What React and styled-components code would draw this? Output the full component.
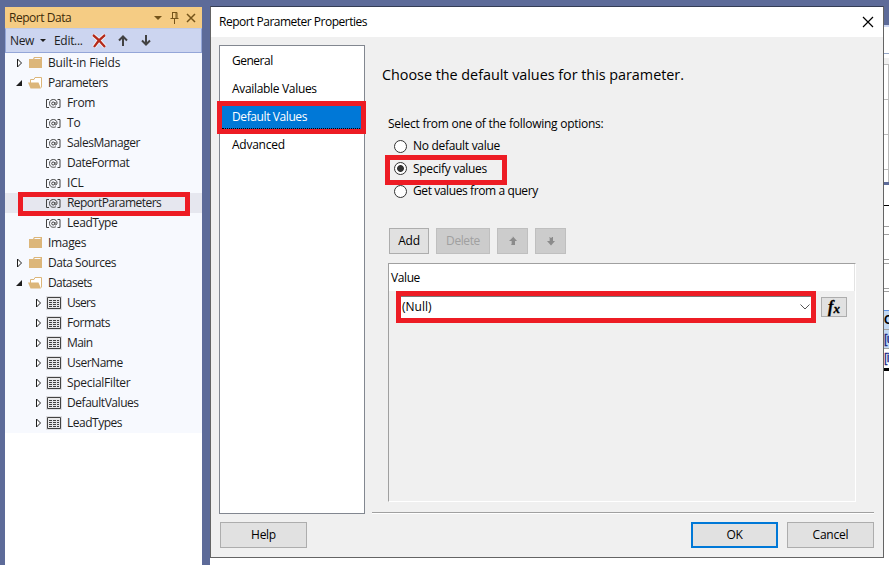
import React from 'react';
import styled, { createGlobalStyle, css } from 'styled-components';

const Global = createGlobalStyle`
  *{box-sizing:border-box}
  body{margin:0;overflow:hidden;background:#5d6b99;font:12px/16px "Open Sans","Noto Sans",sans-serif;color:#000}
`;
const Screen = styled.div`position:relative;display:flex;width:889px;height:565px;overflow:hidden;background:#5d6b99;`;
const Label = styled.span`white-space:pre;letter-spacing:${p => p.$ls || 0}px;`;

/* Report data pane */
const Pane = styled.aside`width:197px;height:558px;margin:7px 8px 0 5px;background:#fff;flex:none;`;
const PaneTitle = styled.header`height:21px;background:#f5cc84;display:flex;align-items:center;padding-left:4px;color:#3d2b0a;
  span{width:144px} svg{flex:none}`;
const Toolbar = styled.div`height:25px;background:#ccd5f0;border:1px solid #94a6d8;border-top-color:#c0cbe8;display:flex;align-items:center;padding-left:4px;color:#1e1e1e;`;
const Tree = styled.div`background:#f7f9fe;height:380px;`;
const TreeRow = styled.div`height:20px;display:flex;align-items:center;color:#1e1e1e;padding-left:${p => (p.$level ? 30 : 11)}px;
  background:${p => (p.$on ? '#e6e7ef' : 'transparent')};svg{flex:none}`;
const Slot = styled.span`display:flex;width:${p => p.$w}px;height:20px;align-items:center;flex:none;`;

/* Dialog */
const Dialog = styled.section`width:674px;height:552px;margin-top:6px;flex:none;background:#f0f0f0;border:1px solid #646464;border-top-color:#343d55;display:flex;flex-direction:column;`;
const DialogTitle = styled.header`height:30px;background:#fff;display:flex;justify-content:space-between;align-items:center;padding:0 9px 0 8px;`;
const Body = styled.div`display:flex;height:477px;padding:8px 9px 0 8px;`;
const Nav = styled.nav`width:146px;height:469px;background:#fff;border:1px solid #828790;padding:1px 2px;`;
const NavItem = styled.div`height:28px;padding:6px 10px;
  ${p => p.$on && css`color:#fff;background:#0078d7;height:26px;margin-bottom:2px;border-bottom:1px dotted #000;`}`;
const Content = styled.main`width:502px;margin-left:7px;height:469px;display:flex;flex-direction:column;border-bottom:1px solid #fff;box-shadow:inset 0 -1px #a0a0a0;`;
const Heading = styled.h1`margin:20px 0 0 10px;font:400 14.4px/20px "Open Sans",sans-serif;white-space:pre;letter-spacing:${p => p.$ls}px;`;
const Prompt = styled.div`margin:31px 0 0 16px;height:16px;`;
const Options = styled.div`margin:3px 0 0 22px;height:68px;`;
const Option = styled.div`height:22.5px;display:flex;align-items:center;gap:6px;`;
const Radio = styled.i`width:13px;height:13px;border:1px solid #333;border-radius:50%;background:${p => (p.$on ? 'radial-gradient(circle,#333 0 3px,#fff 3.8px)' : '#fff')};`;
const Actions = styled.div`display:flex;gap:7px;margin:25px 0 0 17px;`;
const Button = styled.button`width:${p => p.$w}px;height:26px;padding:0;border:${p => (p.$primary ? '2px solid #0078d7' : '1px solid #adadad')};background:#e1e1e1;
  font:inherit;color:#000;display:flex;align-items:center;justify-content:center;flex:none;
  &:disabled{background:#ccc;border-color:#bfbfbf;color:#a0a0a0}`;
const Grid = styled.div`margin:9px 0 0 16px;width:468px;height:239px;border:1px solid #fff;border-top-color:#a0a0a0;border-left-color:#a0a0a0;`;
const GridHead = styled.div`height:27px;background:#fff;padding:6px 2px;border-right:1px solid #e3e3e3;`;
const GridRow = styled.div`display:flex;align-items:center;height:32px;padding-left:10px;gap:8px;`;
const Combo = styled.div`width:414px;height:23px;background:#fff;border:1px solid #7a7a7a;display:flex;align-items:center;justify-content:space-between;padding:0 2px;`;
const FxButton = styled(Button)`height:20px;font:italic bold 16px/18px "Liberation Serif",serif;-webkit-text-stroke:.3px #000;sub{font-size:13px;line-height:0;vertical-align:-1px}`;
const Footer = styled.footer`height:43px;padding:8px 9px 0 9px;display:flex;gap:9px;`;
const Spacer = styled.div`flex:1;`;

/* Designer surface at the right edge */
const Strip = styled.div`width:5px;height:565px;flex:none;overflow:hidden;`;
const Band = styled.div`height:${p => p.$h}px;background:${p => p.$c || '#fff'};border-bottom:${p => p.$b || '0'};border-right:${p => p.$r || '0'};
  font:bold 12px/18px "Liberation Sans",sans-serif;color:#000;overflow:hidden;white-space:pre;
  ${p => p.$field && css`font-weight:400;color:#1a237e;letter-spacing:-.5px;-webkit-text-stroke:.3px #1a237e;`}`;
const Below = styled.div`position:absolute;left:210px;top:558px;right:0;bottom:0;background:#fff;`;
const Mark = styled.div`position:absolute;border:5px solid #ed1c24;left:${p => p.$x}px;top:${p => p.$y}px;width:${p => p.$w}px;height:${p => p.$h}px;`;

const Arrow = ({ open }) => (
  <svg width="8" height="12" viewBox="0 0 8 12">
    {open ? <path d="M6 3v6H0z" fill="#1e1e1e" /> : <path d="M1.500 2v8l4-4z" fill="#fff" stroke="#1e1e1e" />}
  </svg>
);
const Folder = ({ open }) => (
  <svg width="15" height="14" viewBox="0 0 15 14">
    {open ? (<><path d="M2.500 8V3.500H6l1-2h6.500v10" fill="#fff" stroke="#dcb67a" /><path d="M0 6.500h10.500l2.500 6H2.500z" fill="#dcb67a" /></>)
      : (<><path d="M1 3h4l1-2h8v11H1z" fill="#dcb67a" /><path d="M6.500 2.500h6" stroke="#f7f9fe" /></>)}
  </svg>
);
const ParamIcon = () => (
  <svg width="15" height="13" viewBox="0 0 15 13" fill="none" stroke="#424242">
    <path d="M3 2.500H.5v8H3M11.500 2.500H14v8h-2.500" />
    <path d="M9.800 9.800C6.500 11.200 3.500 9.500 3.500 6.500s2-4 4-4 3.500 1.500 3.500 3.500-2 2.800-2 1V5" /><circle cx="7.200" cy="6.500" r="1.500" />
  </svg>
);
const TableIcon = () => (
  <svg width="16" height="14" viewBox="0 0 16 14">
    <path d="M0 0h16v14H0z" fill="#dedee2" /><path d="M1.500 1.500h13v11h-13z" fill="#e8e8ea" stroke="#424242" />
    <path d="M3 4.500h3M7 4.500h3M11 4.500h2M3 6.500h3M7 6.500h3M11 6.500h2M3 8.500h3M7 8.500h3M11 8.500h2M3 10.500h3M7 10.500h3M11 10.500h2" stroke="#424242" />
  </svg>
);
const MoveIcon = ({ down }) => (
  <svg width="10" height="10" viewBox="0 0 10 10">
    <path d={down ? 'M3 1h4v4h2L5 9.500 1 5h2z' : 'M5 .5 9 5H7v4H3V5H1z'} fill="#8b8b8b" />
    <path d={down ? 'M3.500 5V1.500H6' : 'M1.500 4.500 5 1M3.500 5v3.500'} stroke="#b5b5b5" fill="none" />
  </svg>
);
const ToolArrow = ({ down }) => (
  <svg width="10" height="13" viewBox="0 0 10 13" fill="none" stroke="#424242" strokeWidth="2">
    <path d={down ? 'M5 1v9M1 6.500l4 4 4-4' : 'M5 12V3M1 6.500l4-4 4 4'} />
  </svg>
);

const rows = [
  ['folder', 'Built-in Fields', -0.18, 'closed'], ['open', 'Parameters', -0.52, 'open'],
  ['param', 'From', -0.35], ['param', 'To', -0.15], ['param', 'SalesManager', -0.45], ['param', 'DateFormat', -0.45], ['param', 'ICL', -0.15],
  ['param', 'ReportParameters', -0.54, null, true], ['param', 'LeadType', -0.42],
  ['folder', 'Images', -0.32], ['folder', 'Data Sources', -0.48, 'closed'], ['open', 'Datasets', -0.6, 'open'],
  ['table', 'Users', -0.7, 'closed'], ['table', 'Formats', -0.45, 'closed'], ['table', 'Main', -0.6, 'closed'], ['table', 'UserName', -0.5, 'closed'],
  ['table', 'SpecialFilter', -0.3, 'closed'], ['table', 'DefaultValues', -0.45, 'closed'], ['table', 'LeadTypes', -0.48, 'closed'],
];
const icons = { folder: <Folder />, open: <Folder open />, param: <ParamIcon />, table: <TableIcon /> };
const dash = '1px dashed #a0a0a0';

export default function App() {
  return (
    <Screen>
      <Global />
      <Pane>
        <PaneTitle>
          <Label $ls={-0.47}>Report Data</Label>
          <svg width="48" height="14" viewBox="0 0 48 14" fill="none" stroke="#75541a">
            <path d="M1 5h8L5 9z" fill="#75541a" stroke="none" />
            <path d="M19 1.500h5v6M19.500 1.500v6M23 1v7M17.500 7.500h8M21.500 8v5" />
            <path d="m34 3 8 8m0-8-8 8" strokeWidth="1.500" />
          </svg>
        </PaneTitle>
        <Toolbar>
          <Slot $w={30}><Label $ls={-0.4}>New</Label></Slot>
          <Slot $w={14}><svg width="6" height="4"><path d="M0 0h6L3 3z" fill="#1e1e1e" /></svg></Slot>
          <Slot $w={38}><Label $ls={-0.3}>Edit...</Label></Slot>
          <Slot $w={26}><svg width="15" height="14" viewBox="0 0 15 14"><path d="M1 1c4 3 8 7 12 12M13 1C9 4 5 8 2 13" stroke="#f3f5fb" strokeWidth="4" fill="none" /><path d="M1 1c4 3 8 7 12 12M13 1C9 4 5 8 2 13" stroke="#b52a1a" strokeWidth="2.200" fill="none" /></svg></Slot>
          <Slot $w={23}><ToolArrow /></Slot>
          <ToolArrow down />
        </Toolbar>
        <Tree>
          {rows.map(([kind, text, spacing, state, on]) => {
            const level = kind === 'param' || kind === 'table';
            return (
              <TreeRow key={text} $level={level} $on={on}>
                <Slot $w={kind === 'table' || kind === 'param' ? 11 : 12}>{state && <Arrow open={state === 'open'} />}</Slot>
                <Slot $w={level ? 21 : 20}>{icons[kind]}</Slot>
                <Label $ls={spacing}>{text}</Label>
              </TreeRow>
            );
          })}
        </Tree>
      </Pane>
      <Dialog>
        <DialogTitle>
          <Label $ls={-0.5}>Report Parameter Properties</Label>
          <svg width="12" height="12" viewBox="0 0 12 12"><path d="m1 1 10 10M11 1 1 11" stroke="#000" strokeWidth="1.200" /></svg>
        </DialogTitle>
        <Body>
          <Nav>
            <NavItem><Label $ls={-0.5}>General</Label></NavItem>
            <NavItem><Label $ls={-0.32}>Available Values</Label></NavItem>
            <NavItem $on><Label $ls={-0.4}>Default Values</Label></NavItem>
            <NavItem><Label $ls={-0.25}>Advanced</Label></NavItem>
          </Nav>
          <Content>
            <Heading $ls={-0.03}>Choose the default values for this parameter.</Heading>
            <Prompt><Label $ls={-0.26}>Select from one of the following options:</Label></Prompt>
            <Options>
              <Option><Radio /><Label $ls={-0.3}>No default value</Label></Option>
              <Option><Radio $on /><Label $ls={-0.3}>Specify values</Label></Option>
              <Option><Radio /><Label $ls={-0.4}>Get values from a query</Label></Option>
            </Options>
            <Actions>
              <Button $w={40}><Label $ls={-0.2}>Add</Label></Button><Button $w={54} disabled><Label $ls={-0.4}>Delete</Label></Button>
              <Button $w={31} disabled><MoveIcon /></Button><Button $w={31} disabled><MoveIcon down /></Button>
            </Actions>
            <Grid>
              <GridHead><Label $ls={-0.4}>Value</Label></GridHead>
              <GridRow>
                <Combo><Label>(Null)</Label><svg width="10" height="6" fill="none" stroke="#555"><path d="m.5.5 4.500 4.500L9.500.5" /></svg></Combo>
                <FxButton $w={26}><span>f<sub>x</sub></span></FxButton>
              </GridRow>
            </Grid>
          </Content>
        </Body>
        <Footer>
          <Button $w={87}><Label $ls={-0.3}>Help</Label></Button><Spacer />
          <Button $w={87} $primary><Label $ls={-0.4}>OK</Label></Button><Button $w={87}><Label $ls={-0.2}>Cancel</Label></Button>
        </Footer>
      </Dialog>
      <Strip>
        <Band $h={25} $c="#5d6b99" /><Band $h={2} $c="#ccd5f0" /><Band $h={27} $b="1px solid #94a6c8" />
        <Band $h={4} /><Band $h={7} $c="#f0f0f0" $b="1px solid #bbb" />
        {[35, 35, 35].map((h, i) => <Band key={i} $h={h} $b="1px solid #bbb" $r="1px solid #bbb" />)}
        <Band $h={12} $r="1px solid #bbb" /><Band $h={3} $c="#5d6b99" /><Band $h={21} $b="1px solid #000" />
        <Band $h={21} $b={dash} /><Band $h={8} $b={dash} /><Band $h={25} $b={dash} /><Band $h={4} $b={dash} /><Band $h={25} $b={dash} /><Band $h={3} $b={dash} />
        <Band $h={19} $b="1px solid #5b8fe0" /><Band $h={19} $c="#c3d9f3" $b={dash}>C</Band>
        <Band $h={19} $c="#c3d9f3" $b={dash} $field>[u</Band><Band $h={19} $field>[i</Band><Band $h={3} $c="#000" /><Band $h={195} />
      </Strip>
      <Below />
      <Mark $x={18} $y={192} $w={172} $h={24} />
      <Mark $x={217} $y={101} $w={149} $h={33} />
      <Mark $x={385} $y={155} $w={122} $h={30} />
      <Mark $x={396} $y={291} $w={420} $h={32} />
    </Screen>
  );
}
